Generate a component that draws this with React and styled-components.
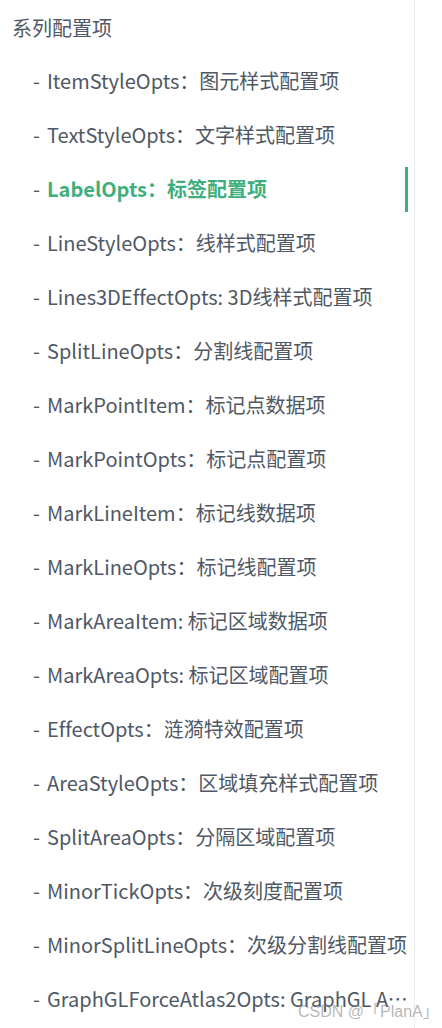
import React from "react";
import styled, { createGlobalStyle } from "styled-components";

const Global = createGlobalStyle`
  html, body { margin: 0; padding: 0; background: #fff; }
  body {
    font-family: "Noto Sans CJK SC", "Noto Sans", sans-serif;
    font-variant-ligatures: none;
    font-feature-settings: "liga" 0;
  }
`;

const Page = styled.div`
  display: flex;
  width: 442px;
  height: 1028px;
  overflow: hidden;
  position: relative;
`;

const Sidebar = styled.nav`
  width: 415px;
  border-right: 1px solid #ebedf0;
  box-sizing: border-box;
  padding-top: 8px;
`;

const Title = styled.div`
  padding-left: 12px;
  height: 40px;
  line-height: 40px;
  font-size: 20px;
  color: #4f5864;
`;

const List = styled.ul`
  list-style: none;
  margin: 0;
  padding: 0;
  padding-top: 6px;
`;

const Item = styled.li`
  position: relative;
  height: 54px;
  line-height: 54px;
  padding-left: 33px;
  padding-right: 6px;
  font-size: 20px;
  color: ${(p) => (p.$active ? "#3eaf7c" : "#4f5864")};
  font-weight: ${(p) => (p.$active ? 700 : 400)};
  white-space: nowrap;
  overflow: hidden;
  text-overflow: ellipsis;
  &::after {
    content: "";
    display: ${(p) => (p.$active ? "block" : "none")};
    position: absolute;
    right: 6px;
    top: 5px;
    width: 3px;
    height: 45px;
    background: #3eaf7c;
  }
`;

const Dash = styled.span`
  display: inline-block;
  width: 14px;
  color: #4f5864;
  font-weight: 400;
`;

const Watermark = styled.div`
  position: absolute;
  left: 298px;
  top: 998px;
  font-family: "Liberation Sans", "Noto Sans CJK SC", sans-serif;
  font-size: 16px;
  color: rgba(120, 120, 120, 0.55);
  white-space: nowrap;
`;

const items = [
  "ItemStyleOpts：图元样式配置项",
  "TextStyleOpts：文字样式配置项",
  "LabelOpts：标签配置项",
  "LineStyleOpts：线样式配置项",
  "Lines3DEffectOpts: 3D线样式配置项",
  "SplitLineOpts：分割线配置项",
  "MarkPointItem：标记点数据项",
  "MarkPointOpts：标记点配置项",
  "MarkLineItem：标记线数据项",
  "MarkLineOpts：标记线配置项",
  "MarkAreaItem: 标记区域数据项",
  "MarkAreaOpts: 标记区域配置项",
  "EffectOpts：涟漪特效配置项",
  "AreaStyleOpts：区域填充样式配置项",
  "SplitAreaOpts：分隔区域配置项",
  "MinorTickOpts：次级刻度配置项",
  "MinorSplitLineOpts：次级分割线配置项",
  "GraphGLForceAtlas2Opts: GraphGL Atlas2 配置项",
];

export default function App() {
  return (
    <>
      <Global />
      <Page>
        <Sidebar>
          <Title>系列配置项</Title>
          <List>
            {items.map((t, i) => (
              <Item key={t} $active={i === 2}>
                <Dash>-</Dash>
                {t}
              </Item>
            ))}
          </List>
        </Sidebar>
        <Watermark>CSDN @「PlanA」</Watermark>
      </Page>
    </>
  );
}
